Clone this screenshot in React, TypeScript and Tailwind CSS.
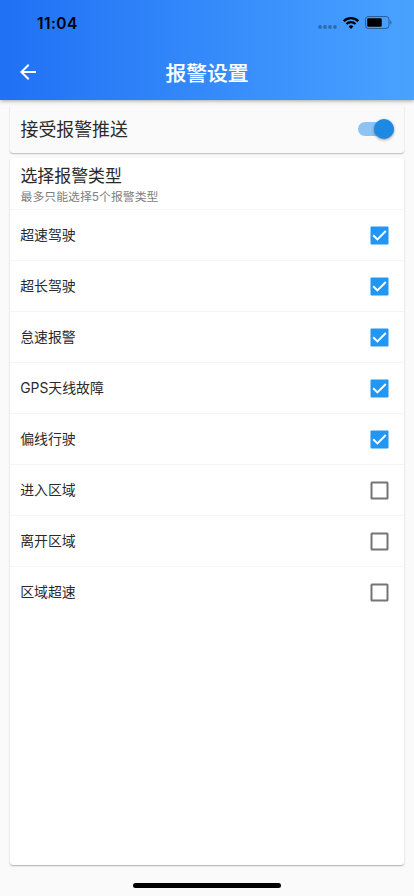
import React, { useState } from 'react';

interface AlarmType {
  name: string;
  checked: boolean;
}

const MAX_SELECTED = 5;

const initialTypes: AlarmType[] = [
  { name: '超速驾驶', checked: true },
  { name: '超长驾驶', checked: true },
  { name: '怠速报警', checked: true },
  { name: 'GPS天线故障', checked: true },
  { name: '偏线行驶', checked: true },
  { name: '进入区域', checked: false },
  { name: '离开区域', checked: false },
  { name: '区域超速', checked: false },
];

const StatusBar: React.FC = () => (
  <div className="flex h-11 items-start justify-between pl-[37px] pr-[22px] pt-[13px] text-black">
    <span className="pt-px font-['Inter','Liberation_Sans',sans-serif] text-[15.5px] font-semibold leading-5 tracking-[0.4px]">11:04</span>
    <div className="flex items-center pt-[3px]">
      <svg className="mt-2 h-1 w-[19px]" viewBox="0 0 19 4" fill="#000" fillOpacity="0.3">
        <circle cx="2" cy="2" r="1.9" />
        <circle cx="7" cy="2" r="1.9" />
        <circle cx="12" cy="2" r="1.9" />
        <circle cx="17" cy="2" r="1.9" />
      </svg>
      <svg className="ml-1.5 h-3 w-4" viewBox="0 0 16 12">
        <path d="M.8 4.2a10.2 10.2 0 0 1 14.4 0" fill="none" stroke="#000" strokeWidth="2.3" />
        <path d="M3.4 7a6.5 6.5 0 0 1 9.2 0" fill="none" stroke="#000" strokeWidth="2.1" />
        <path d="M8 12 5.6 9.5a3.4 3.4 0 0 1 4.8 0z" />
      </svg>
      <svg className="ml-[6px] h-[13px] w-[27px]" viewBox="0 0 27 13">
        <rect x="0.5" y="0.5" width="23.5" height="12" rx="3" fill="none" stroke="#000" strokeOpacity="0.4" />
        <rect x="2.2" y="2.2" width="14.5" height="8.6" rx="1.2" />
        <path d="M25.3 4.5a2.3 2.3 0 0 1 0 4z" fillOpacity="0.45" />
      </svg>
    </div>
  </div>
);

interface SwitchProps {
  on: boolean;
  onToggle: () => void;
}

const Switch: React.FC<SwitchProps> = ({ on, onToggle }) => (
  <button
    type="button"
    role="switch"
    aria-checked={on}
    onClick={onToggle}
    className={`flex h-3.5 w-9 items-center rounded-full ${on ? 'justify-end bg-[#8fc3f3]' : 'justify-start bg-black/30'}`}
  >
    <span
      className={`h-5 w-5 shrink-0 rounded-full shadow-[0_1px_3px_rgba(0,0,0,0.4)] ${on ? 'bg-[#1e88e5]' : 'bg-white'}`}
    ></span>
  </button>
);

const Checkbox: React.FC<{ checked: boolean }> = ({ checked }) =>
  checked ? (
    <svg className="h-[19px] w-[19px]" viewBox="0 0 19 19">
      <rect x="0.5" y="0.5" width="18" height="18" rx="1" fill="#2196f3" />
      <path d="M3.2 9.2 7.4 13.4 15.8 5" fill="none" stroke="#fff" strokeWidth="2" />
    </svg>
  ) : (
    <svg className="h-[19px] w-[19px]" viewBox="0 0 19 19">
      <rect x="1.5" y="1.5" width="16" height="16" rx="0.5" fill="none" stroke="#757575" strokeWidth="2" />
    </svg>
  );

const App: React.FC = () => {
  const [push, setPush] = useState(true);
  const [types, setTypes] = useState(initialTypes);

  const toggleType = (index: number) => {
    const selected = types.filter((t) => t.checked).length;
    // Block a new selection once the limit is reached
    if (!types[index].checked && selected >= MAX_SELECTED) return;
    setTypes(types.map((t, i) => (i === index ? { ...t, checked: !t.checked } : t)));
  };

  return (
    <div className="flex h-[896px] w-full flex-col bg-[#fafafa] font-['Inter','Noto_Sans_CJK_SC',sans-serif] text-[#2a2a2a]">
      <header className="z-10 h-[100px] shrink-0 bg-linear-to-r from-[#2170f5] to-[#4aa2ff] shadow-[0_1px_4px_rgba(0,0,0,0.35)]">
        <StatusBar />
        <div className="grid h-14 grid-cols-[56px_1fr_56px] items-center text-white">
          <button type="button" aria-label="返回" className="flex justify-center">
            <svg className="h-6 w-6" viewBox="0 0 24 24" fill="currentColor">
              <path d="M20 11H7.83l5.59-5.59L12 4l-8 8 8 8 1.41-1.41L7.83 13H20v-2z" />
            </svg>
          </button>
          <h1 className="pt-[3px] text-center text-[20.8px] font-medium leading-7 [-webkit-text-stroke:0.15px_white]">报警设置</h1>
        </div>
      </header>

      <main className="flex flex-1 flex-col gap-[5px] px-[10.4px] pb-[31px] pt-[5px]">
        <section className="flex h-12 shrink-0 items-center justify-between rounded-[3px] bg-[#fafafa] pl-[10.1px] pr-[9.6px] shadow-[0_1px_1.5px_rgba(0,0,0,0.25)]">
          <span className="pt-0.5 text-[17.9px] leading-6">接受报警推送</span>
          <Switch on={push} onToggle={() => setPush(!push)} />
        </section>

        <section className="flex-1 rounded-[3px] bg-white shadow-[0_1px_1.5px_rgba(0,0,0,0.3)]">
          <div className="h-[52px] border-b border-[#f5f5f5] pl-[10.1px] pt-[6px]">
            <h2 className="text-[16.9px] leading-6">选择报警类型</h2>
            <p className="text-[11.9px] leading-[18px] text-[#808080]">最多只能选择5个报警类型</p>
          </div>
          <ul>
            {types.map((type, index) => (
              <li
                key={type.name}
                onClick={() => toggleType(index)}
                className="flex h-[51px] items-center justify-between border-b border-[#f5f5f5] pl-[9.8px] pr-[14.6px] last:border-transparent"
              >
                <span className="text-[13.9px] leading-5">{type.name}</span>
                <Checkbox checked={type.checked} />
              </li>
            ))}
          </ul>
        </section>
      </main>

      <div className="absolute left-[133px] top-[882.5px] h-[5px] w-[148px] rounded-full bg-black"></div>
    </div>
  );
};

export default App;
